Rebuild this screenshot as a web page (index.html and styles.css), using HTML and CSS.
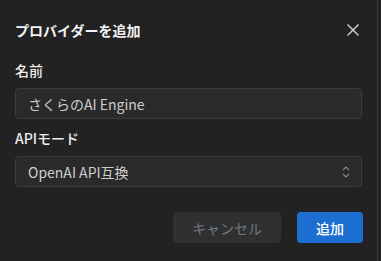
FILE: index.html
```html
<!DOCTYPE html>
<html lang="ja">
<head>
<meta charset="utf-8">
<link rel="stylesheet" href="styles.css">
</head>
<body>
<div class="dialog">
  <div class="header">
    <h1 class="title">プロバイダーを追加</h1>
    <button class="close" aria-label="閉じる">
      <svg width="16" height="16" viewBox="0 0 16 16"><path d="M2.5 2.5 L13.5 13.5 M13.5 2.5 L2.5 13.5" stroke="#d8d8d8" stroke-width="1.4" fill="none"/></svg>
    </button>
  </div>
  <div class="field">
    <label class="label">名前</label>
    <div class="input">さくらのAI Engine</div>
  </div>
  <div class="field field2">
    <label class="label">APIモード</label>
    <div class="input select">
      <span>OpenAI API互換</span>
      <svg class="chev" width="10" height="14" viewBox="0 0 10 14"><path d="M2 5 L5 2 L8 5 M2 9 L5 12 L8 9" stroke="#8a8a8a" stroke-width="1.1" fill="none"/></svg>
    </div>
  </div>
  <div class="actions">
    <button class="btn cancel">キャンセル</button>
    <button class="btn primary">追加</button>
  </div>
</div>
</body>
</html>
```
FILE: styles.css
```css
html, body {
  margin: 0;
  padding: 0;
  background: #222222;
  font-family: "Noto Sans CJK JP", "Noto Sans", sans-serif;
}
.dialog {
  width: 378px;
  height: 261px;
  box-sizing: border-box;
  padding: 20px 15px 0 15px;
  border-right: 1px solid #383838;
  display: flex;
  flex-direction: column;
}
.header {
  display: flex;
  justify-content: space-between;
  align-items: center;
  height: 20px;
}
.title {
  margin: 0;
  font-size: 14px;
  font-weight: 700;
  line-height: 20px;
  color: #f2f2f2;
}
.close {
  background: none;
  border: none;
  padding: 0;
  width: 16px;
  height: 16px;
  margin-right: 1px;
  display: flex;
}
.field {
  display: flex;
  flex-direction: column;
  gap: 8px;
  margin-top: 20px;
}
.field2 {
  margin-top: 9px;
}
.label {
  font-size: 14px;
  font-weight: 500;
  line-height: 20px;
  color: #ececec;
}
.input {
  height: 31px;
  box-sizing: border-box;
  border: 1px solid #3b3b3b;
  border-radius: 4px;
  background: #2a2a2a;
  padding: 0 12px;
  font-size: 14px;
  color: #cfcfcf;
  display: flex;
  align-items: center;
}
.select {
  justify-content: space-between;
  padding-right: 10px;
}
.chev {
  display: block;
}
.actions {
  display: flex;
  justify-content: flex-end;
  gap: 16px;
  margin-top: 25px;
  margin-right: -1px;
}
.btn {
  height: 31px;
  border: none;
  border-radius: 4px;
  font-family: inherit;
  font-size: 14px;
  padding: 0;
}
.cancel {
  width: 108px;
  background: #2e3032;
  color: #74777a;
}
.primary {
  width: 66px;
  background: #1c6fd0;
  color: #ffffff;
  font-weight: 500;
}
```
